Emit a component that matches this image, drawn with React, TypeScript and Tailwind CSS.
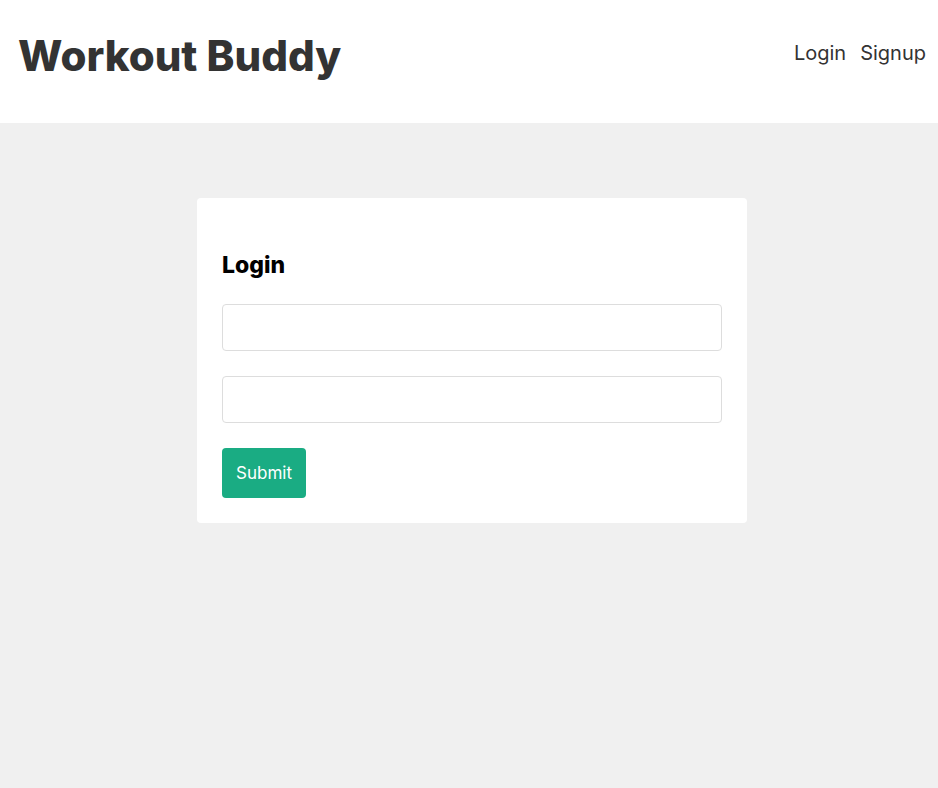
export default function App() {
  return (
    <div className="min-h-[788px] bg-[#f0f0f0] font-['Inter',sans-serif] text-[#333]">
      <header className="h-[123px] bg-white flex items-center justify-between pl-[18px] pr-[12px] pb-[12px]">
        <h1 className="text-[42px] font-extrabold text-[#333] leading-none">
          Workout Buddy
        </h1>
        <nav className="flex items-center gap-[14px] text-[20px] text-[#333] mb-[5px]">
          <a href="#">Login</a>
          <a href="#">Signup</a>
        </nav>
      </header>

      <main className="pt-[75px] pl-[6px] flex justify-center">
        <form className="w-[550px] bg-white rounded-[4px] px-[25px] pt-[52px] pb-[25px]">
          <h3 className="text-[23px] font-extrabold text-black leading-[30px] mb-[24px]">Login</h3>
          <input
            type="email"
            className="block w-full h-[47px] border border-[#ddd] rounded-[4px] bg-white px-[10px] outline-none"
          />
          <input
            type="password"
            className="block w-full h-[47px] border border-[#ddd] rounded-[4px] bg-white px-[10px] mt-[25px] outline-none"
          />
          <button
            type="button"
            className="mt-[25px] h-[50px] w-[84px] pt-[2px] bg-[#1aac83] text-white text-[17px] rounded-[4px]"
          >
            Submit
          </button>
        </form>
      </main>
    </div>
  )
}
